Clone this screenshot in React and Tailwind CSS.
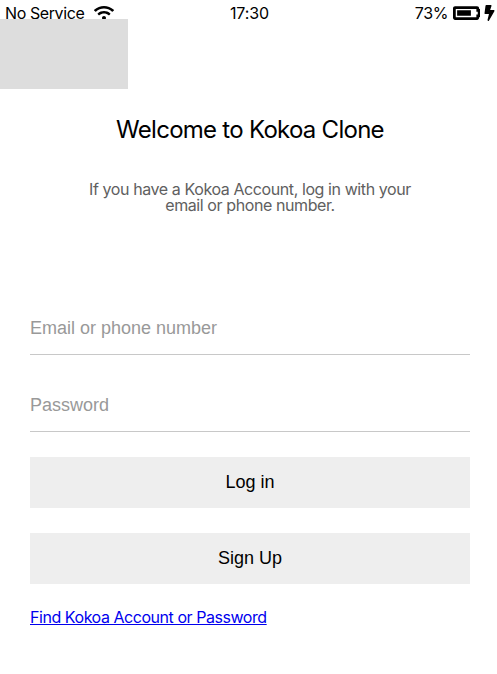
import { FaWifi, FaBatteryThreeQuarters, FaBolt } from "react-icons/fa";

function StatusBar() {
  return (
    <div className="flex h-[19px] items-start justify-between pl-[5px] pr-[2px] text-[16px] leading-[27px]">
      <div className="flex w-[160px] items-start">
        <span className="w-[88.5px] whitespace-nowrap tracking-[-0.4px]">No Service</span>
        <FaWifi className="mt-[5px] h-4 w-5 shrink-0" />
      </div>
      <span className="mr-px tracking-[-0.1px]">17:30</span>
      <div className="flex w-[160px] items-start justify-end">
        <span className="mr-[4.5px] tracking-[-0.4px]">73%</span>
        <FaBatteryThreeQuarters className="mt-[2px] h-[22px] w-[27.5px] shrink-0" />
        <FaBolt className="ml-[4px] mt-[5px] h-4 w-[11px] shrink-0" />
      </div>
    </div>
  );
}

function Field({ type, placeholder }) {
  return (
    <input
      type={type}
      placeholder={placeholder}
      className="block h-[53px] w-full border-b border-[#c8c8c8] bg-transparent font-['Liberation_Sans',Arial,sans-serif] text-[18px] outline-none placeholder:text-[#999999]"
    />
  );
}

function Button({ children }) {
  return (
    <button className="block h-[51px] w-full bg-[#eeeeee] text-center font-['Liberation_Sans',Arial,sans-serif] text-[18px] text-black">
      {children}
    </button>
  );
}

export default function App() {
  return (
    <div className="h-[674px] overflow-hidden bg-white font-['Inter',sans-serif] text-black">
      <StatusBar />
      <div className="relative h-[70px] w-32 bg-[#dddddd]" />
      <header className="pl-[3px] pt-[26px] text-center">
        <h1 className="text-[24px] leading-[30px] tracking-[-0.73px]">Welcome to Kokoa Clone</h1>
        <p className="mx-auto mt-[36px] w-[340px] text-[16px] leading-4 tracking-[-0.41px] text-[#606060]">
          If you have a Kokoa Account, log in with your email or phone number.
        </p>
      </header>
      <form className="ml-[30px] mt-[89px] w-[440px]">
        <Field type="text" placeholder="Email or phone number" />
        <div className="mt-6">
          <Field type="password" placeholder="Password" />
        </div>
        <div className="mt-[25px] flex flex-col gap-[25px]">
          <Button>Log in</Button>
          <Button>Sign Up</Button>
        </div>
        <a href="#" className="mt-[23px] inline-block text-[16px] leading-5 tracking-[-0.45px] text-[#0000ee] underline">
          Find Kokoa Account or Password
        </a>
      </form>
    </div>
  );
}
